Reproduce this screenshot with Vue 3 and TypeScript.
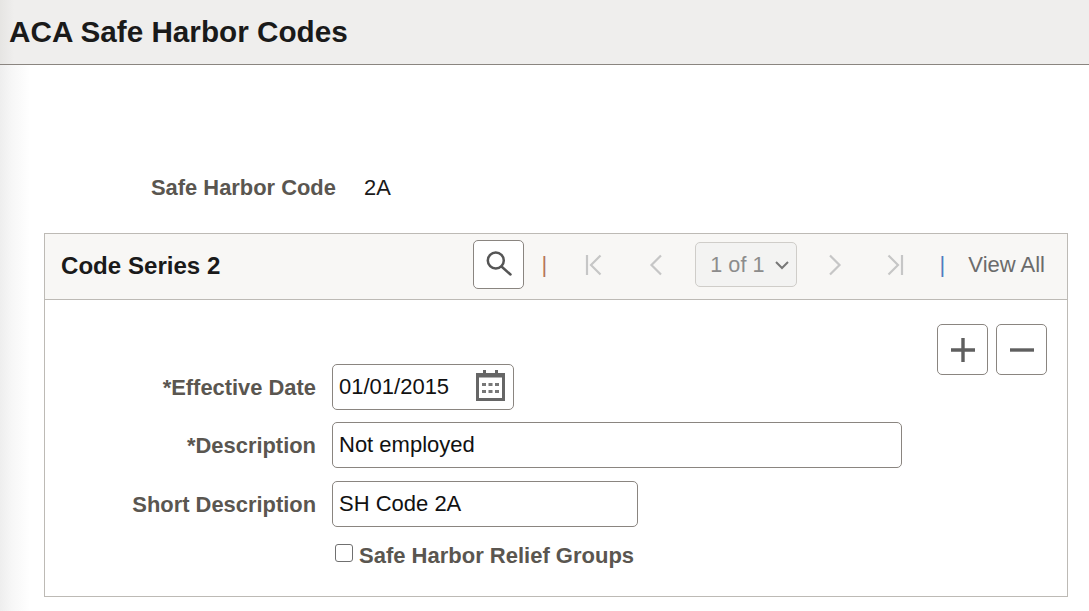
<script setup lang="ts">
const fields = [
  { label: '*Effective Date', value: '01/01/2015', cls: 'date' },
  { label: '*Description', value: 'Not employed', cls: 'desc' },
  { label: 'Short Description', value: 'SH Code 2A', cls: 'short' },
]
</script>

<template>
  <div class="page">
    <header class="title-bar"><h1>ACA Safe Harbor Codes</h1></header>
    <main class="content">
      <div class="code-row">
        <span class="code-label">Safe Harbor Code</span>
        <span class="code-value">2A</span>
      </div>
      <section class="panel">
        <div class="panel-head">
          <h2>Code Series 2</h2>
          <div class="nav">
            <button class="icon-btn search" aria-label="Search">
              <svg width="26" height="26" viewBox="0 0 26 26" fill="none" stroke="#555" stroke-width="2.5">
                <circle cx="9.8" cy="10.5" r="8" />
                <path d="M15.5 16.5 L24.5 24.5" stroke-linecap="round" />
              </svg>
            </button>
            <span class="sep first">|</span>
            <svg class="pg pg-first" width="20" height="22" viewBox="0 0 20 22" fill="none" stroke="#c6c6c6" stroke-width="2.2">
              <path d="M2 1 V21" /><path d="M15.5 1.5 L6 11 L15.5 20.5" />
            </svg>
            <svg class="pg pg-prev" width="15" height="22" viewBox="0 0 15 22" fill="none" stroke="#c6c6c6" stroke-width="2.2">
              <path d="M13 1.5 L3.5 11 L13 20.5" />
            </svg>
            <div class="pager-select">
              <span>1 of 1</span>
              <svg width="16" height="10" viewBox="0 0 16 10" fill="none" stroke="#777" stroke-width="2">
                <path d="M2 2 L8 8 L14 2" />
              </svg>
            </div>
            <svg class="pg pg-next" width="15" height="22" viewBox="0 0 15 22" fill="none" stroke="#c6c6c6" stroke-width="2.2">
              <path d="M2 1.5 L11.5 11 L2 20.5" />
            </svg>
            <svg class="pg pg-last" width="20" height="22" viewBox="0 0 20 22" fill="none" stroke="#c6c6c6" stroke-width="2.2">
              <path d="M18 1 V21" /><path d="M4.5 1.5 L14 11 L4.5 20.5" />
            </svg>
            <span class="sep second">|</span>
            <span class="view-all">View All</span>
          </div>
        </div>
        <div class="panel-body">
          <div class="row-actions">
            <button class="icon-btn square" aria-label="Add">
              <svg width="26" height="26" viewBox="0 0 26 26" stroke="#5f5f5f" stroke-width="3.4">
                <path d="M1 13 H25 M13 1 V25" />
              </svg>
            </button>
            <button class="icon-btn square" aria-label="Remove">
              <svg width="26" height="26" viewBox="0 0 26 26" stroke="#5f5f5f" stroke-width="3.4">
                <path d="M1 13 H25" />
              </svg>
            </button>
          </div>
          <div class="form">
            <template v-for="f in fields" :key="f.label">
              <label class="field-label" :class="f.cls + '-label'">{{ f.label }}</label>
              <div class="input" :class="f.cls">
                <span>{{ f.value }}</span>
                <svg v-if="f.cls === 'date'" class="cal" width="31" height="31" viewBox="0 0 31 31" fill="none">
                  <rect x="2.5" y="4.5" width="26" height="25" stroke="#666" stroke-width="3" />
                  <rect x="2.5" y="4.5" width="26" height="3" fill="#666" />
                  <path d="M9.5 0 V7 M21.5 0 V7" stroke="#666" stroke-width="3" />
                  <g fill="#777">
                    <rect x="7" y="13" width="4" height="3" /><rect x="13.5" y="13" width="4" height="3" /><rect x="20" y="13" width="4" height="3" />
                    <rect x="7" y="20" width="4" height="3" /><rect x="13.5" y="20" width="4" height="3" /><rect x="20" y="20" width="4" height="3" />
                  </g>
                </svg>
              </div>
            </template>
            <span></span>
            <label class="check">
              <input type="checkbox" />
              <span>Safe Harbor Relief Groups</span>
            </label>
          </div>
        </div>
      </section>
    </main>
  </div>
</template>

<style scoped>
.page {
  position: relative;
  width: 1089px;
  height: 611px;
  overflow: hidden;
  background: linear-gradient(to right, #eeeeee 0, #f7f7f7 12px, #ffffff 30px);
  font-family: "Liberation Sans", Arial, sans-serif;
  color: #111;
}
.title-bar {
  height: 64px;
  box-sizing: content-box;
  border-bottom: 1px solid #8a8580;
  background: linear-gradient(to right, #e6e5e3 0, #efeeed 14px, #efeeed 100%);
  display: flex;
  align-items: center;
  padding-left: 9px;
}
h1 {
  margin: 0;
  font-size: 29.7px;
  font-weight: 700;
  color: #1a1a1a;
}
.content {
  padding: 108px 21px 0 44px;
}
.code-row {
  display: flex;
  align-items: center;
  height: 30px;
  padding-left: 107px;
  font-size: 21.9px;
}
.code-label {
  font-weight: 700;
  color: #5a5650;
  width: 213px;
  white-space: nowrap;
}
.code-value { color: #1a1a1a; }
.panel {
  margin-top: 30px;
  border: 1px solid #bdbab5;
  height: 364px;
  box-sizing: border-box;
  background: #fff;
}
.panel-head {
  height: 65px;
  border-bottom: 1px solid #bdbab5;
  background: #f8f7f5;
  display: flex;
  align-items: center;
  justify-content: space-between;
  padding: 0 22px 0 16px;
}
h2 {
  margin: 0;
  font-size: 24.1px;
  font-weight: 700;
  color: #1a1a1a;
  margin-bottom: 2px;
}
.nav {
  display: flex;
  align-items: center;
  color: #6b6b6b;
  font-size: 22px;
  margin-bottom: 4px;
}
.icon-btn {
  box-sizing: border-box;
  width: 51px;
  height: 51px;
  border: 1px solid #8a8580;
  border-radius: 5px;
  background: #fff;
  padding: 0;
  display: flex;
  align-items: center;
  justify-content: center;
}
.search { height: 49px; padding-bottom: 3px; }
.sep { font-size: 22px; color: #6d7f96; width: 6px; text-align: center; }
.sep.first { margin-left: 17px; margin-right: 38px; color: #b5765a; }
.sep.second { margin-left: 35px; margin-right: 23px; color: #4f7cc0; }
.pg-first { margin-right: 43px; }
.pg-prev { margin-right: 32px; }
.pg-next { margin-left: 31px; margin-right: 41px; }
.pager-select {
  box-sizing: border-box;
  width: 102px;
  height: 45px;
  border: 1px solid #cfcdc9;
  border-radius: 5px;
  background: #f3f3f2;
  color: #8c8c8c;
  font-size: 21.6px;
  display: flex;
  align-items: center;
  justify-content: space-between;
  padding: 0 6px 0 14px;
}
.view-all { color: #6b6b6b; }
.panel-body {
  position: relative;
  padding: 64px 0 0 0;
}
.row-actions {
  position: absolute;
  top: 24px;
  right: 20px;
  display: flex;
  gap: 8px;
}
.form {
  display: grid;
  grid-template-columns: 271px auto;
  column-gap: 16px;
  row-gap: 12px;
  align-items: center;
  justify-items: start;
}
.field-label {
  justify-self: end;
  font-size: 21.9px;
  font-weight: 700;
  color: #5a5650;
  white-space: nowrap;
  padding-top: 1px;
}
.input {
  box-sizing: border-box;
  height: 46px;
  border: 1px solid #8a8580;
  border-radius: 5px;
  display: flex;
  align-items: center;
  justify-content: space-between;
  padding: 0 6px;
  font-size: 22px;
  color: #111;
  background: #fff;
}
.cal { margin: 0 1px 3px 0; }
.date { width: 182px; }
.desc { width: 570px; }
.short { width: 306px; margin-top: 1px; }
.short-label { margin-top: 1px; }
.check {
  display: flex;
  align-items: center;
  gap: 6px;
  margin-top: 4px;
  margin-left: 3px;
  font-size: 22px;
  font-weight: 700;
  color: #5a5650;
}
.check input {
  appearance: none;
  box-sizing: border-box;
  width: 18px;
  height: 18px;
  margin: 0;
  border: 1.5px solid #707070;
  border-radius: 3px;
  background: #fff;
  position: relative;
  top: -3px;
}
</style>
